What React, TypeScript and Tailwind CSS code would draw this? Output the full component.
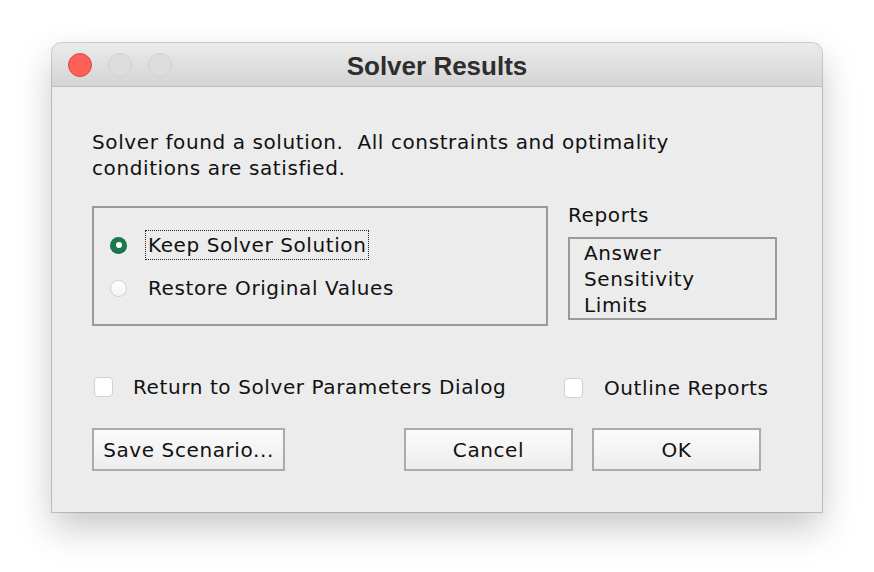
import React from 'react';

const font = { fontFamily: '"DejaVu Sans", "Lucida Grande", sans-serif' };

function Radio({ checked }: { checked?: boolean }) {
  if (checked) {
    return (
      <span className="flex h-[17px] w-[17px] items-center justify-center rounded-full bg-[#1a7a4c] shadow-[inset_0_-1px_1px_rgba(0,0,0,0.2)]">
        <span className="h-[6px] w-[6px] rounded-full bg-white" />
      </span>
    );
  }
  return (
    <span className="h-[17px] w-[17px] rounded-full border border-[#cfcfcf] bg-gradient-to-b from-white to-[#f3f3f3]" />
  );
}

function Checkbox() {
  return <span className="h-[20px] w-[19px] rounded-[4px] border border-[#d0d0d0] bg-white" />;
}

function Button({ label, className }: { label: string; className?: string }) {
  return (
    <button
      type="button"
      className={`h-[43px] border-2 border-[#ababab] bg-gradient-to-b from-[#fbfbfb] to-[#ededed] text-[20px] tracking-[0.6px] text-[#111] ${className ?? ''}`}
    >
      {label}
    </button>
  );
}

export default function App() {
  return (
    <div className="min-h-[572px] w-[874px] bg-white pt-[43px] pl-[52px]" style={font}>
      <div className="flex h-[469px] w-[770px] flex-col overflow-hidden rounded-t-[10px] bg-[#ececec] shadow-[0_0_0_1px_rgba(0,0,0,0.18),0_16px_36px_rgba(0,0,0,0.22)]">
        {/* title bar */}
        <div className="relative flex h-[44px] items-center border-b border-[#bdbdbd] bg-gradient-to-b from-[#ebebeb] to-[#d5d5d5]">
          <div className="flex gap-[16px] pl-[16px]">
            <span className="h-[24px] w-[24px] rounded-full border border-[#e2463f] bg-[#fe5f57]" />
            <span className="h-[24px] w-[24px] rounded-full border border-[#d0d0d0] bg-[#dcdcdc]" />
            <span className="h-[24px] w-[24px] rounded-full border border-[#d0d0d0] bg-[#dcdcdc]" />
          </div>
          <div className="absolute inset-0 flex items-center justify-center pt-[4px] text-[26px] font-bold text-[#2e2e2e]" style={{ fontFamily: '"Liberation Sans", Arial, sans-serif' }}>
            Solver Results
          </div>
        </div>

        {/* body */}
        <div className="flex flex-col px-[40px] pt-[42px] text-[20px] tracking-[0.6px] text-[#111]">
          <p className="leading-[26px]">
            Solver found a solution.&nbsp; All constraints and optimality
            <br />
            conditions are satisfied.
          </p>

          <div className="mt-[25px] flex">
            <div className="flex h-[120px] w-[456px] flex-col gap-[14px] border-2 border-[#9a9a9a] pt-[22px] pl-[16px]">
              <div className="flex items-center gap-[18px]">
                <Radio checked />
                <span className="border border-dotted border-[#222] px-[2px] leading-[28px]">Keep Solver Solution</span>
              </div>
              <div className="flex items-center gap-[21px]">
                <Radio />
                <span className="leading-[28px]">Restore Original Values</span>
              </div>
            </div>

            <div className="ml-[20px] flex flex-col">
              <span className="-mt-[4px] leading-[26px]">Reports</span>
              <div className="mt-[9px] flex h-[83px] w-[209px] flex-col border-2 border-[#9a9a9a] pt-[1px] pl-[14px] leading-[26px]">
                <span>Answer</span>
                <span>Sensitivity</span>
                <span>Limits</span>
              </div>
            </div>
          </div>

          <div className="mt-[47px] flex items-center">
            <div className="flex w-[472px] items-center gap-[20px] pl-[2px]">
              <Checkbox />
              <span className="leading-[26px]">Return to Solver Parameters Dialog</span>
            </div>
            <div className="flex items-center gap-[21px] pt-[2px]">
              <Checkbox />
              <span className="leading-[26px]">Outline Reports</span>
            </div>
          </div>

          <div className="mt-[27px] flex">
            <Button label="Save Scenario..." className="w-[193px]" />
            <Button label="Cancel" className="ml-[119px] w-[169px]" />
            <Button label="OK" className="ml-[19px] w-[169px]" />
          </div>
        </div>
      </div>
    </div>
  );
}
